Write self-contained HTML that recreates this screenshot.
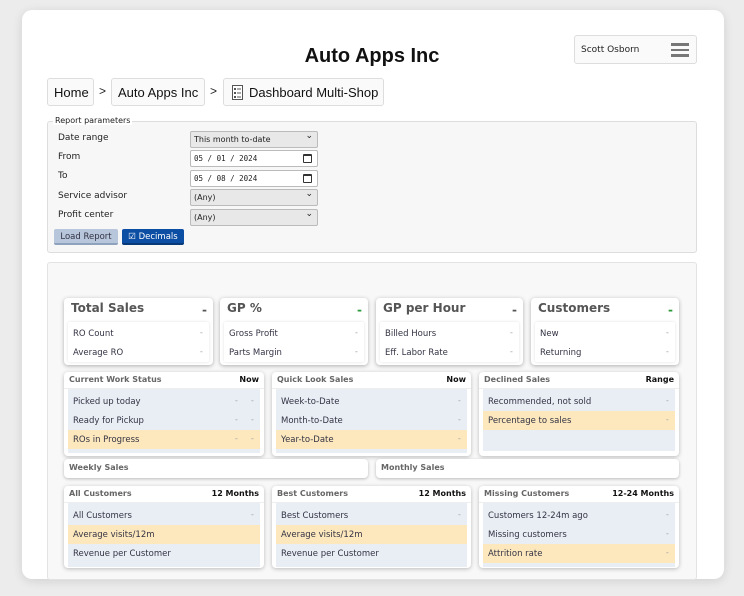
<!DOCTYPE html>
<html><head><meta charset="utf-8"><style>
*{box-sizing:border-box;margin:0;padding:0}
body{width:744px;height:596px;background:#ececec;font-family:"DejaVu Sans","Liberation Sans",sans-serif;position:relative;overflow:hidden;color:#333}
.card{position:absolute;left:22px;top:10px;width:702px;height:569px;background:#fff;border-radius:10px;box-shadow:0 2px 10px rgba(0,0,0,.12)}
.a{position:absolute;white-space:nowrap}
.title{left:0;width:744px;top:45px;text-align:center;font:bold 20px "Liberation Sans",sans-serif;color:#111}
.user{left:574px;top:35px;width:123px;height:29px;border:1px solid #ddd;border-radius:3px;background:#fafafa;font-size:9px;color:#222;padding:9px 0 0 6px}
.burger{position:absolute;right:7px;top:7px;width:18px}
.burger i{display:block;height:2.5px;background:#777;margin-bottom:3px}
.bc{top:78px;height:28px;border:1px solid #ddd;border-radius:3px;background:#fafafa;font:13px "Liberation Sans",sans-serif;color:#111;padding:6px 6px 0}
.gt{top:84px;font:12px "Liberation Sans",sans-serif;color:#222}
.fs{left:47px;top:121px;width:650px;height:132px;border:1px solid #ddd;border-radius:3px;background:#f7f7f7}
.lg{left:53px;top:116px;background:#fff;font-size:8px;color:#222;padding:0 2px}
.lb{left:58px;font-size:9px;color:#222}
.in{left:190px;width:128px;height:17px;border:1px solid #bbb;border-radius:2px;font-size:8px;color:#222;padding:3px 0 0 3px}
.sel{background:#e8e8e8}
.sel:after{content:"⌄";position:absolute;right:4px;top:-1px;font-size:9px}
.dt{background:#fff;font-family:"DejaVu Sans Mono",monospace;font-size:7.5px}
.cal{position:absolute;right:5px;top:3px;width:9px;height:9px;border:1.3px solid #333;border-top-width:2.5px;border-radius:1px}
.btn{top:229px;height:16px;font-size:8.5px;padding:3px 0 0;text-align:center;border-radius:2px}
.dash{left:47px;top:262px;width:650px;height:318px;border:1px solid #e3e3e3;border-radius:3px;background:#f8f8f8}
.tc{top:298px;height:67px;background:#fff;border-radius:4px;box-shadow:0 1px 4px rgba(0,0,0,.3);padding:3px 4px}
.tc h3{font-size:12px;font-weight:bold;color:#555;height:21px;position:relative;padding-left:3px}
.tc h3 b{position:absolute;right:2px;top:2px;font-size:12px;color:#555}
.tc h3 b.g{color:#2a9a3a}
.tc .bd{background:#fff;box-shadow:0 0 3px rgba(0,0,0,.12);border-radius:2px;padding-top:2px}
.row{height:19px;font-size:8.5px;color:#334;padding:5px 5px 0 5px;position:relative}
.row .d{position:absolute;right:6px;top:4px;color:#aaa}
.row .d2{position:absolute;right:22px;top:4px;color:#aaa}
.pn{background:#fff;border-radius:4px;box-shadow:0 1px 4px rgba(0,0,0,.25)}
.pn .hd{height:17px;font-size:8px;font-weight:bold;color:#666;padding:3px 5px 0;position:relative;border-bottom:1px solid #eee}
.pn .hd b{position:absolute;right:5px;top:3px;color:#111}
.pn .bd{background:#e9eef4;margin:0 4px;padding:3px 0 4px}
.hl{background:#fde8bd}
.wk{top:459px;height:19px;background:#fff;border-radius:4px;box-shadow:0 1px 3px rgba(0,0,0,.25);font-size:8px;font-weight:bold;color:#666;padding:4px 5px}
</style></head><body>
<div class="card"></div>
<div class="a title">Auto Apps Inc</div>
<div class="a user">Scott Osborn<div class="burger"><i></i><i></i><i></i></div></div>
<div class="a bc" style="left:47px;width:47px">Home</div>
<div class="a gt" style="left:99px">&gt;</div>
<div class="a bc" style="left:111px;width:94px">Auto Apps Inc</div>
<div class="a gt" style="left:210px">&gt;</div>
<div class="a bc" style="left:223px;width:161px;padding-left:25px"><svg style="position:absolute;left:8px;top:6px" width="11" height="15" viewBox="0 0 11 15"><rect x=".5" y=".5" width="10" height="14" fill="#fff" stroke="#555"/><rect x="2" y="3" width="2" height="2" fill="#555"/><rect x="5" y="3.5" width="4" height="1" fill="#555"/><rect x="2" y="7" width="2" height="2" fill="#555"/><rect x="5" y="7.5" width="4" height="1" fill="#555"/><rect x="2" y="11" width="2" height="2" fill="#555"/><rect x="5" y="11.5" width="4" height="1" fill="#555"/></svg>Dashboard Multi-Shop</div>

<div class="a fs"></div>
<div class="a lg">Report parameters</div>
<div class="a lb" style="top:133px">Date range</div>
<div class="a lb" style="top:152px">From</div>
<div class="a lb" style="top:171px">To</div>
<div class="a lb" style="top:191px">Service advisor</div>
<div class="a lb" style="top:210px">Profit center</div>
<div class="a in sel" style="top:131px">This month to-date</div>
<div class="a in dt" style="top:150px">05 / 01 / 2024<span class="cal"></span></div>
<div class="a in dt" style="top:170px">05 / 08 / 2024<span class="cal"></span></div>
<div class="a in sel" style="top:189px">(Any)</div>
<div class="a in sel" style="top:209px">(Any)</div>
<div class="a btn" style="left:54px;width:64px;background:#b7c6da;color:#334;border-bottom:2px solid #8ea2bd">Load Report</div>
<div class="a btn" style="left:122px;width:62px;background:#0c4ea3;color:#fff;border-bottom:2px solid #073877">&#9745; Decimals</div>

<div class="a dash"></div>

<div class="a tc" style="left:64px;width:149px"><h3>Total Sales<b>-</b></h3><div class="bd"><div class="row">RO Count<span class="d">-</span></div><div class="row">Average RO<span class="d">-</span></div></div></div>
<div class="a tc" style="left:220px;width:148px"><h3>GP %<b class="g">-</b></h3><div class="bd"><div class="row">Gross Profit<span class="d">-</span></div><div class="row">Parts Margin<span class="d">-</span></div></div></div>
<div class="a tc" style="left:376px;width:147px"><h3>GP per Hour<b>-</b></h3><div class="bd"><div class="row">Billed Hours<span class="d">-</span></div><div class="row">Eff. Labor Rate<span class="d">-</span></div></div></div>
<div class="a tc" style="left:531px;width:148px"><h3>Customers<b class="g">-</b></h3><div class="bd"><div class="row">New<span class="d">-</span></div><div class="row">Returning<span class="d">-</span></div></div></div>

<div class="a pn" style="left:64px;top:372px;width:200px;height:84px"><div class="hd">Current Work Status<b>Now</b></div><div class="bd"><div class="row">Picked up today<span class="d2">-</span><span class="d">-</span></div><div class="row">Ready for Pickup<span class="d2">-</span><span class="d">-</span></div><div class="row hl">ROs in Progress<span class="d2">-</span><span class="d">-</span></div></div></div>
<div class="a pn" style="left:272px;top:372px;width:199px;height:84px"><div class="hd">Quick Look Sales<b>Now</b></div><div class="bd"><div class="row">Week-to-Date<span class="d">-</span></div><div class="row">Month-to-Date<span class="d">-</span></div><div class="row hl">Year-to-Date<span class="d">-</span></div></div></div>
<div class="a pn" style="left:479px;top:372px;width:200px;height:84px"><div class="hd">Declined Sales<b>Range</b></div><div class="bd" style="height:62px"><div class="row">Recommended, not sold<span class="d">-</span></div><div class="row hl">Percentage to sales<span class="d">-</span></div></div></div>

<div class="a wk" style="left:64px;width:304px">Weekly Sales</div>
<div class="a wk" style="left:376px;width:303px">Monthly Sales</div>

<div class="a pn" style="left:64px;top:486px;width:200px;height:82px"><div class="hd">All Customers<b>12 Months</b></div><div class="bd"><div class="row">All Customers<span class="d">-</span></div><div class="row hl">Average visits/12m</div><div class="row">Revenue per Customer</div></div></div>
<div class="a pn" style="left:272px;top:486px;width:199px;height:82px"><div class="hd">Best Customers<b>12 Months</b></div><div class="bd"><div class="row">Best Customers<span class="d">-</span></div><div class="row hl">Average visits/12m</div><div class="row">Revenue per Customer</div></div></div>
<div class="a pn" style="left:479px;top:486px;width:200px;height:82px"><div class="hd">Missing Customers<b>12-24 Months</b></div><div class="bd"><div class="row">Customers 12-24m ago<span class="d">-</span></div><div class="row">Missing customers<span class="d">-</span></div><div class="row hl">Attrition rate<span class="d">-</span></div></div></div>
</body></html>
